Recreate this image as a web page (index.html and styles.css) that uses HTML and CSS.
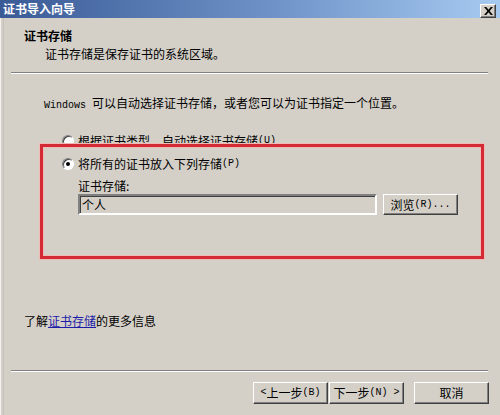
FILE: index.html
```html
<!DOCTYPE html>
<html lang="zh-CN">
<head>
  <meta charset="UTF-8" />
  <title>证书导入向导</title>
  <link rel="stylesheet" href="styles.css">
</head>
<body>
  <div class="wizard">
    <div class="titlebar">
      <span class="title">证书导入向导</span>
      <span class="close-btn">
        <svg width="9" height="8" viewBox="0 0 9 8">
          <path d="M0 0h2.2l2.3 2.7 2.3-2.7h2.2l-3.4 4 3.4 4h-2.2l-2.3-2.7-2.3 2.7h-2.2l3.4-4z" fill="#000"/>
        </svg>
      </span>
    </div>

    <div class="header">
      <div class="header-title">证书存储</div>
      <div class="header-sub">证书存储是保存证书的系统区域。</div>
    </div>
    <div class="rule top"></div>

    <div class="content">
      <p class="intro"><span class="en">Windows </span>可以自动选择证书存储，或者您可以为证书指定一个位置。</p>
      <div class="option"><span class="radio"></span>根据证书类型，自动选择证书存储<span class="en">(U)</span></div>
      <div class="option second"><span class="radio checked"></span>将所有的证书放入下列存储<span class="en">(P)</span></div>
      <div class="store">
        <div class="store-label">证书存储:</div>
        <div class="store-row">
          <div class="field">个人</div>
          <div class="btn browse">浏览<span class="en">(R)...</span></div>
        </div>
      </div>
      <div class="highlight"></div>
    </div>

    <div class="more">了解<a href="#">证书存储</a>的更多信息</div>
    <div class="rule bottom"></div>

    <div class="footer">
      <div class="nav">
        <div class="btn"><span class="en">&lt; </span>上一步<span class="en">(B)</span></div>
        <div class="btn">下一步<span class="en">(N) &gt;</span></div>
      </div>
      <div class="btn cancel">取消</div>
    </div>
  </div>
</body>
</html>
```

FILE: styles.css
```css
body {
  margin: 0;
  background: #d4d0c8;
  font-family: "Noto Sans CJK SC", "Noto Sans", sans-serif;
  font-size: 12px;
  line-height: 14px;
  color: #000;
}

.wizard {
  width: 500px;
  height: 415px;
  display: flex;
  flex-direction: column;
  background: #d4d0c8;
  box-shadow: inset 1px 0 0 #f4f2ee, inset 3px 0 0 #d4d0c8, inset 4px 0 0 #c4c0b8;
}

.en {
  font-family: "Liberation Mono", monospace;
  font-size: 10px;
}

.titlebar {
  height: 18px;
  display: flex;
  align-items: center;
  justify-content: space-between;
  padding: 0 4px 0 3px;
  background: linear-gradient(90deg, #3a5a96 0%, #6f93c8 55%, #a6caf0 100%);
}

.title {
  color: #fff;
  font-weight: bold;
  line-height: 18px;
}

.close-btn {
  width: 14px;
  height: 12px;
  margin-top: 3px;
  display: flex;
  align-items: center;
  justify-content: center;
  background: #d4d0c8;
  border: 1px solid;
  border-color: #fff #404040 #404040 #fff;
  box-shadow: inset -1px -1px 0 #808080;
}

.header {
  padding: 11px 0 11px 24px;
}

.header-title {
  font-weight: bold;
}

.header-sub {
  margin-top: 4px;
  padding-left: 21px;
}

.rule {
  height: 0;
  border-top: 1px solid #808080;
  border-bottom: 1px solid #fff;
  margin: 0 12px 0 11px;
}

.content {
  flex: 1;
  position: relative;
}

.intro {
  margin: 22px 0 0 44px;
}

.option {
  display: flex;
  align-items: center;
  margin: 21px 0 0 62px;
}

.option.second {
  margin-top: 9px;
}

.radio {
  width: 10px;
  height: 10px;
  margin-right: 4px;
  border: 1px solid;
  border-color: #808080 #fff #fff #808080;
  border-radius: 50%;
  background: #fff;
  box-shadow: inset 1px 1px 0 #404040;
  display: flex;
  align-items: center;
  justify-content: center;
}

.radio.checked::after {
  content: "";
  width: 4px;
  height: 4px;
  border-radius: 50%;
  background: #000;
}

.store {
  padding-left: 78px;
  margin-top: 8px;
}

.store-row {
  display: flex;
  margin-top: 1px;
  gap: 6px;
}

.field {
  width: 293px;
  height: 17px;
  padding-left: 2px;
  line-height: 17px;
  border: 2px solid;
  border-color: #808080 #fff #fff #808080;
  box-shadow: inset 1px 1px 0 #404040;
}

.btn {
  width: 73px;
  height: 20px;
  display: flex;
  align-items: center;
  justify-content: center;
  background: #d4d0c8;
  border: 1px solid;
  border-color: #fff #404040 #404040 #fff;
  box-shadow: inset -1px -1px 0 #808080;
}

.browse {
  width: 73px;
  height: 19px;
}

.highlight {
  position: absolute;
  left: 40px;
  top: 70px;
  width: 438px;
  height: 109px;
  border: 3px solid #d42a36;
  box-shadow: 0 0 0 1px #eebcb4, inset 0 0 0 1px #eebcb4;
}

.more {
  padding-left: 24px;
  margin-bottom: 42px;
}

.more a {
  color: #1c1ca8;
}

.footer {
  display: flex;
  justify-content: flex-end;
  gap: 10px;
  padding: 10px 11px 11px 0;
}

.nav {
  display: flex;
  gap: 1px;
}
```
